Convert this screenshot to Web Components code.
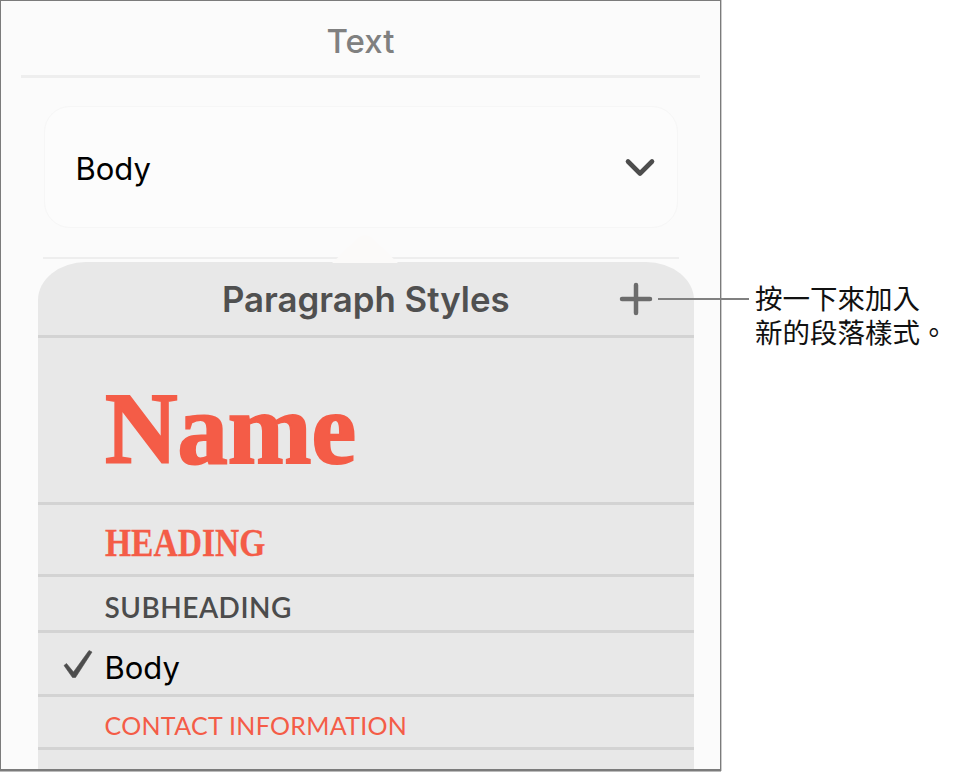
<!DOCTYPE html>
<html lang="zh-Hant">
<head>
<meta charset="utf-8">
<title>Paragraph Styles</title>
<style>
html,body{margin:0;padding:0;background:#fff;}
body{width:959px;height:772px;overflow:hidden;font-family:"Liberation Sans",Arial,sans-serif;}
</style>
</head>
<body>
<help-figure>
  <inspector-frame>
    <inspector-title>Text</inspector-title>
    <style-select>Body</style-select>
    <style-popover heading="Paragraph Styles">
      <style-row h="167" kind="name">Name</style-row>
      <style-row h="72" kind="heading">HEADING</style-row>
      <style-row h="56" kind="sub">SUBHEADING</style-row>
      <style-row h="64" kind="body" checked>Body</style-row>
      <style-row h="53" kind="contact">CONTACT INFORMATION</style-row>
      <style-row h="40" kind="empty"></style-row>
    </style-popover>
  </inspector-frame>
  <call-out>按一下來加入<br>新的段落樣式。</call-out>
</help-figure>
<script>
function def(name, css, html, init){
  customElements.define(name, class extends HTMLElement{
    constructor(){
      super();
      const r=this.attachShadow({mode:'open'});
      r.innerHTML='<style>'+css+'</style>'+html;
      if(init) init(this,r);
    }
    connectedCallback(){ if(this.ready) this.ready(this.shadowRoot); }
  });
}
def('help-figure',':host{display:block;position:relative;width:959px;height:772px;}','<slot></slot>');
def('inspector-frame',`:host{display:block;box-sizing:border-box;width:721px;height:771px;background:#fbfbfb;border:1.5px solid #7b7b7b;border-bottom-width:2px;overflow:hidden;box-shadow:0 1px 0 #bbb,1px 0 0 #ccc;}`,'<slot></slot>');
def('inspector-title',`:host{display:flex;box-sizing:border-box;align-items:center;justify-content:center;height:77px;margin:0 20px;border-bottom:3px solid #eeeeee;color:#808080;font:500 33px Inter,sans-serif;padding-top:6px;}`,'<slot></slot>');
def('style-select',`:host{display:block;margin:27.5px 42px 0 42.5px;}
.box{box-sizing:border-box;height:122px;display:flex;align-items:center;justify-content:space-between;padding:0 21px 0 31px;border:1px solid #f6f6f6;border-radius:26px;background:#fcfcfc;color:#000;font:31px Inter,sans-serif;}
.lbl{padding-top:4px;}
svg{display:block;margin-top:3px}
.rule{height:2px;background:#eeeeee;margin:29px -1px 0 -1px;}`,
`<div class="box"><span class="lbl"><slot></slot></span><svg width="32" height="20" viewBox="0 0 32 20"><path d="M4 3.5 16 15.5 28 3.5" fill="none" stroke="#4d4d4d" stroke-width="4.6" stroke-linecap="round" stroke-linejoin="round"/></svg></div><div class="rule"></div>`);
def('style-popover',`:host{display:block;position:relative;margin:3px 26px 0 36.5px;}
.caret{position:absolute;left:292px;top:-28px;}
.panel{background:#e8e8e8;border-radius:48px 48px 0 0/38px 38px 0 0;overflow:hidden;}
header{position:relative;box-sizing:border-box;height:76px;border-bottom:3px solid #d3d3d3;display:flex;align-items:center;justify-content:center;color:#505050;font:600 34.8px Inter,sans-serif;padding-top:2px;}
svg.plus{position:absolute;right:41px;top:20px;}`,
`<svg class="caret" width="70" height="29" viewBox="0 0 70 29"><path d="M2 29 29 3.5Q35 -1 41 3.5L68 29Z" fill="#fbfaf9"/></svg>
<div class="panel"><header><span id="t"></span><svg class="plus" width="34" height="34" viewBox="0 0 34 34"><path d="M17 3V31M3 17H31" stroke="#6c6c6c" stroke-width="4.5" stroke-linecap="round"/></svg></header><slot></slot></div>`,
(el,r)=>{el.ready=()=>{r.getElementById('t').textContent=el.getAttribute('heading');};});
def('style-row',`:host{display:flex;position:relative;box-sizing:border-box;align-items:center;padding-left:67px;border-bottom:3px solid #d3d3d3;white-space:nowrap;}
:host([kind=empty]){border-bottom:0}
.t{display:inline-block;transform-origin:left center;}
:host([kind=name]){padding-top:18px;color:#f45c47;font:700 102px "Liberation Serif",serif;-webkit-text-stroke:2px #f45c47;}
:host([kind=name]) .t{transform:scaleX(.985);}
:host([kind=heading]){padding-top:6px;color:#f45c47;font:700 39px "Liberation Serif",serif;-webkit-text-stroke:.3px #f45c47;}
:host([kind=heading]) .t{transform:scaleX(.86);}
:host([kind=sub]){padding-top:8px;color:#4c4c4c;font:600 28px Lato,sans-serif;letter-spacing:.5px;}
:host([kind=body]){padding-top:8px;color:#000;font:31px Inter,sans-serif;}
:host([kind=contact]){padding-top:6px;color:#f45c47;font:400 25px Lato,sans-serif;letter-spacing:.3px;}
svg{position:absolute;left:24px;top:15px;display:none}
:host([checked]) svg{display:block}`,
`<svg width="32" height="32" viewBox="0 0 32 32"><path d="M2 17.5 4.5 15.5 11.5 24 27 2.5 30 4 13.5 29.5H10.5Z" fill="#4d4d4d" stroke="#4d4d4d" stroke-width=".6" stroke-linejoin="round"/></svg><span class="t"><slot></slot></span>`,
(el)=>{el.ready=()=>{el.style.height=el.getAttribute('h')+'px';el.style.flex='none';};});
def('call-out',`:host{position:absolute;left:658px;top:280px;display:flex;align-items:flex-start;color:#111;font:27.5px/34px "Noto Sans CJK TC",sans-serif;white-space:nowrap;}
.line{width:91px;height:2px;background:#808080;margin:18px 6px 0 0;}`,
`<div class="line"></div><div lang="zh-TW"><slot></slot></div>`);
</script>
</body>
</html>
